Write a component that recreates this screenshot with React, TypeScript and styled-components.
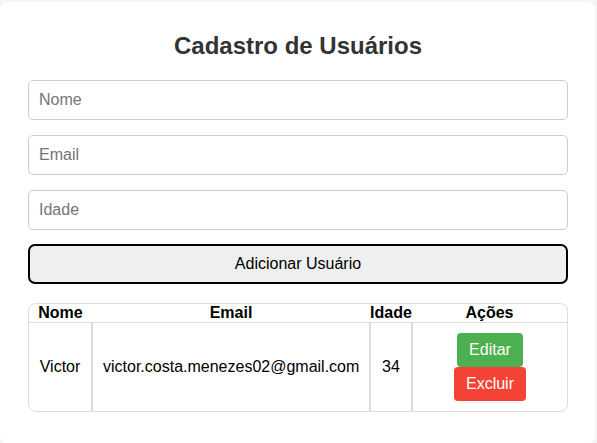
import React from "react";
import styled, { createGlobalStyle } from "styled-components";

const Global = createGlobalStyle`
  html, body {
    margin: 0;
    padding: 0;
    background: #f4f4f4;
    font-family: "Liberation Sans", Arial, sans-serif;
  }
`;

const Page = styled.div`
  padding-top: 2px;
  height: 441px;
  overflow: hidden;
`;

const Card = styled.div`
  width: 595px;
  box-sizing: border-box;
  background: #fff;
  border-radius: 8px;
  padding: 30px 27px 32px 28px;
`;

const Title = styled.h2`
  margin: 0 0 20px;
  font-size: 24px;
  line-height: 28px;
  font-weight: bold;
  color: #333;
  text-align: center;
`;

const Form = styled.div`
  display: flex;
  flex-direction: column;
  gap: 15px;
`;

const Input = styled.input`
  box-sizing: border-box;
  width: 100%;
  height: 40px;
  padding: 10px;
  border: 1px solid #ccc;
  border-radius: 5px;
  font-family: inherit;
  font-size: 16px;
  color: #000;
  outline: none;
  &::placeholder {
    color: #757575;
  }
`;

const AddButton = styled.button`
  box-sizing: border-box;
  width: 100%;
  height: 40px;
  margin-top: -1px;
  border: 2px solid #000;
  border-radius: 7px;
  background: #efefef;
  font-family: inherit;
  font-size: 16px;
  color: #000;
  cursor: pointer;
`;

const Table = styled.table`
  width: 100%;
  margin-top: 19px;
  border-collapse: separate;
  border-spacing: 0;
  table-layout: fixed;
  border: 1px solid #ddd;
  border-radius: 8px;
  overflow: hidden;
  font-size: 16px;
  color: #000;
`;

const Th = styled.th<{ $w?: number }>`
  ${(p) => (p.$w ? `width: ${p.$w}px;` : "")}
  padding: 0;
  line-height: 18px;
  font-weight: bold;
  text-align: center;
  border-bottom: 1px solid #ddd;
`;

const Td = styled.td`
  padding: 10px;
  text-align: center;
  vertical-align: middle;
  line-height: 18px;
  border-right: 1px solid #ddd;
  & + & {
    border-left: 1px solid #ddd;
  }
  &:last-child {
    border-right: none;
  }
  &:first-child {
    border-left: none;
  }
`;

const Actions = styled.div`
  display: flex;
  flex-direction: column;
  align-items: center;
`;

const ActionButton = styled.button<{ $variant: "edit" | "delete" }>`
  border: none;
  border-radius: 4px;
  padding: 8px 12px;
  font-family: inherit;
  font-size: 16px;
  line-height: 18px;
  color: #fff;
  background: ${(p) => (p.$variant === "edit" ? "#4caf50" : "#f44336")};
  cursor: pointer;
`;

export default function App() {
  return (
    <>
      <Global />
      <Page>
        <Card>
          <Title>Cadastro de Usuários</Title>
          <Form>
            <Input placeholder="Nome" />
            <Input placeholder="Email" />
            <Input placeholder="Idade" />
            <AddButton>Adicionar Usuário</AddButton>
          </Form>
          <Table>
            <thead>
              <tr>
                <Th $w={63}>Nome</Th>
                <Th $w={278}>Email</Th>
                <Th $w={42}>Idade</Th>
                <Th>Ações</Th>
              </tr>
            </thead>
            <tbody>
              <tr>
                <Td>Victor</Td>
                <Td>victor.costa.menezes02@gmail.com</Td>
                <Td>34</Td>
                <Td>
                  <Actions>
                    <ActionButton $variant="edit">Editar</ActionButton>
                    <ActionButton $variant="delete">Excluir</ActionButton>
                  </Actions>
                </Td>
              </tr>
            </tbody>
          </Table>
        </Card>
      </Page>
    </>
  );
}
